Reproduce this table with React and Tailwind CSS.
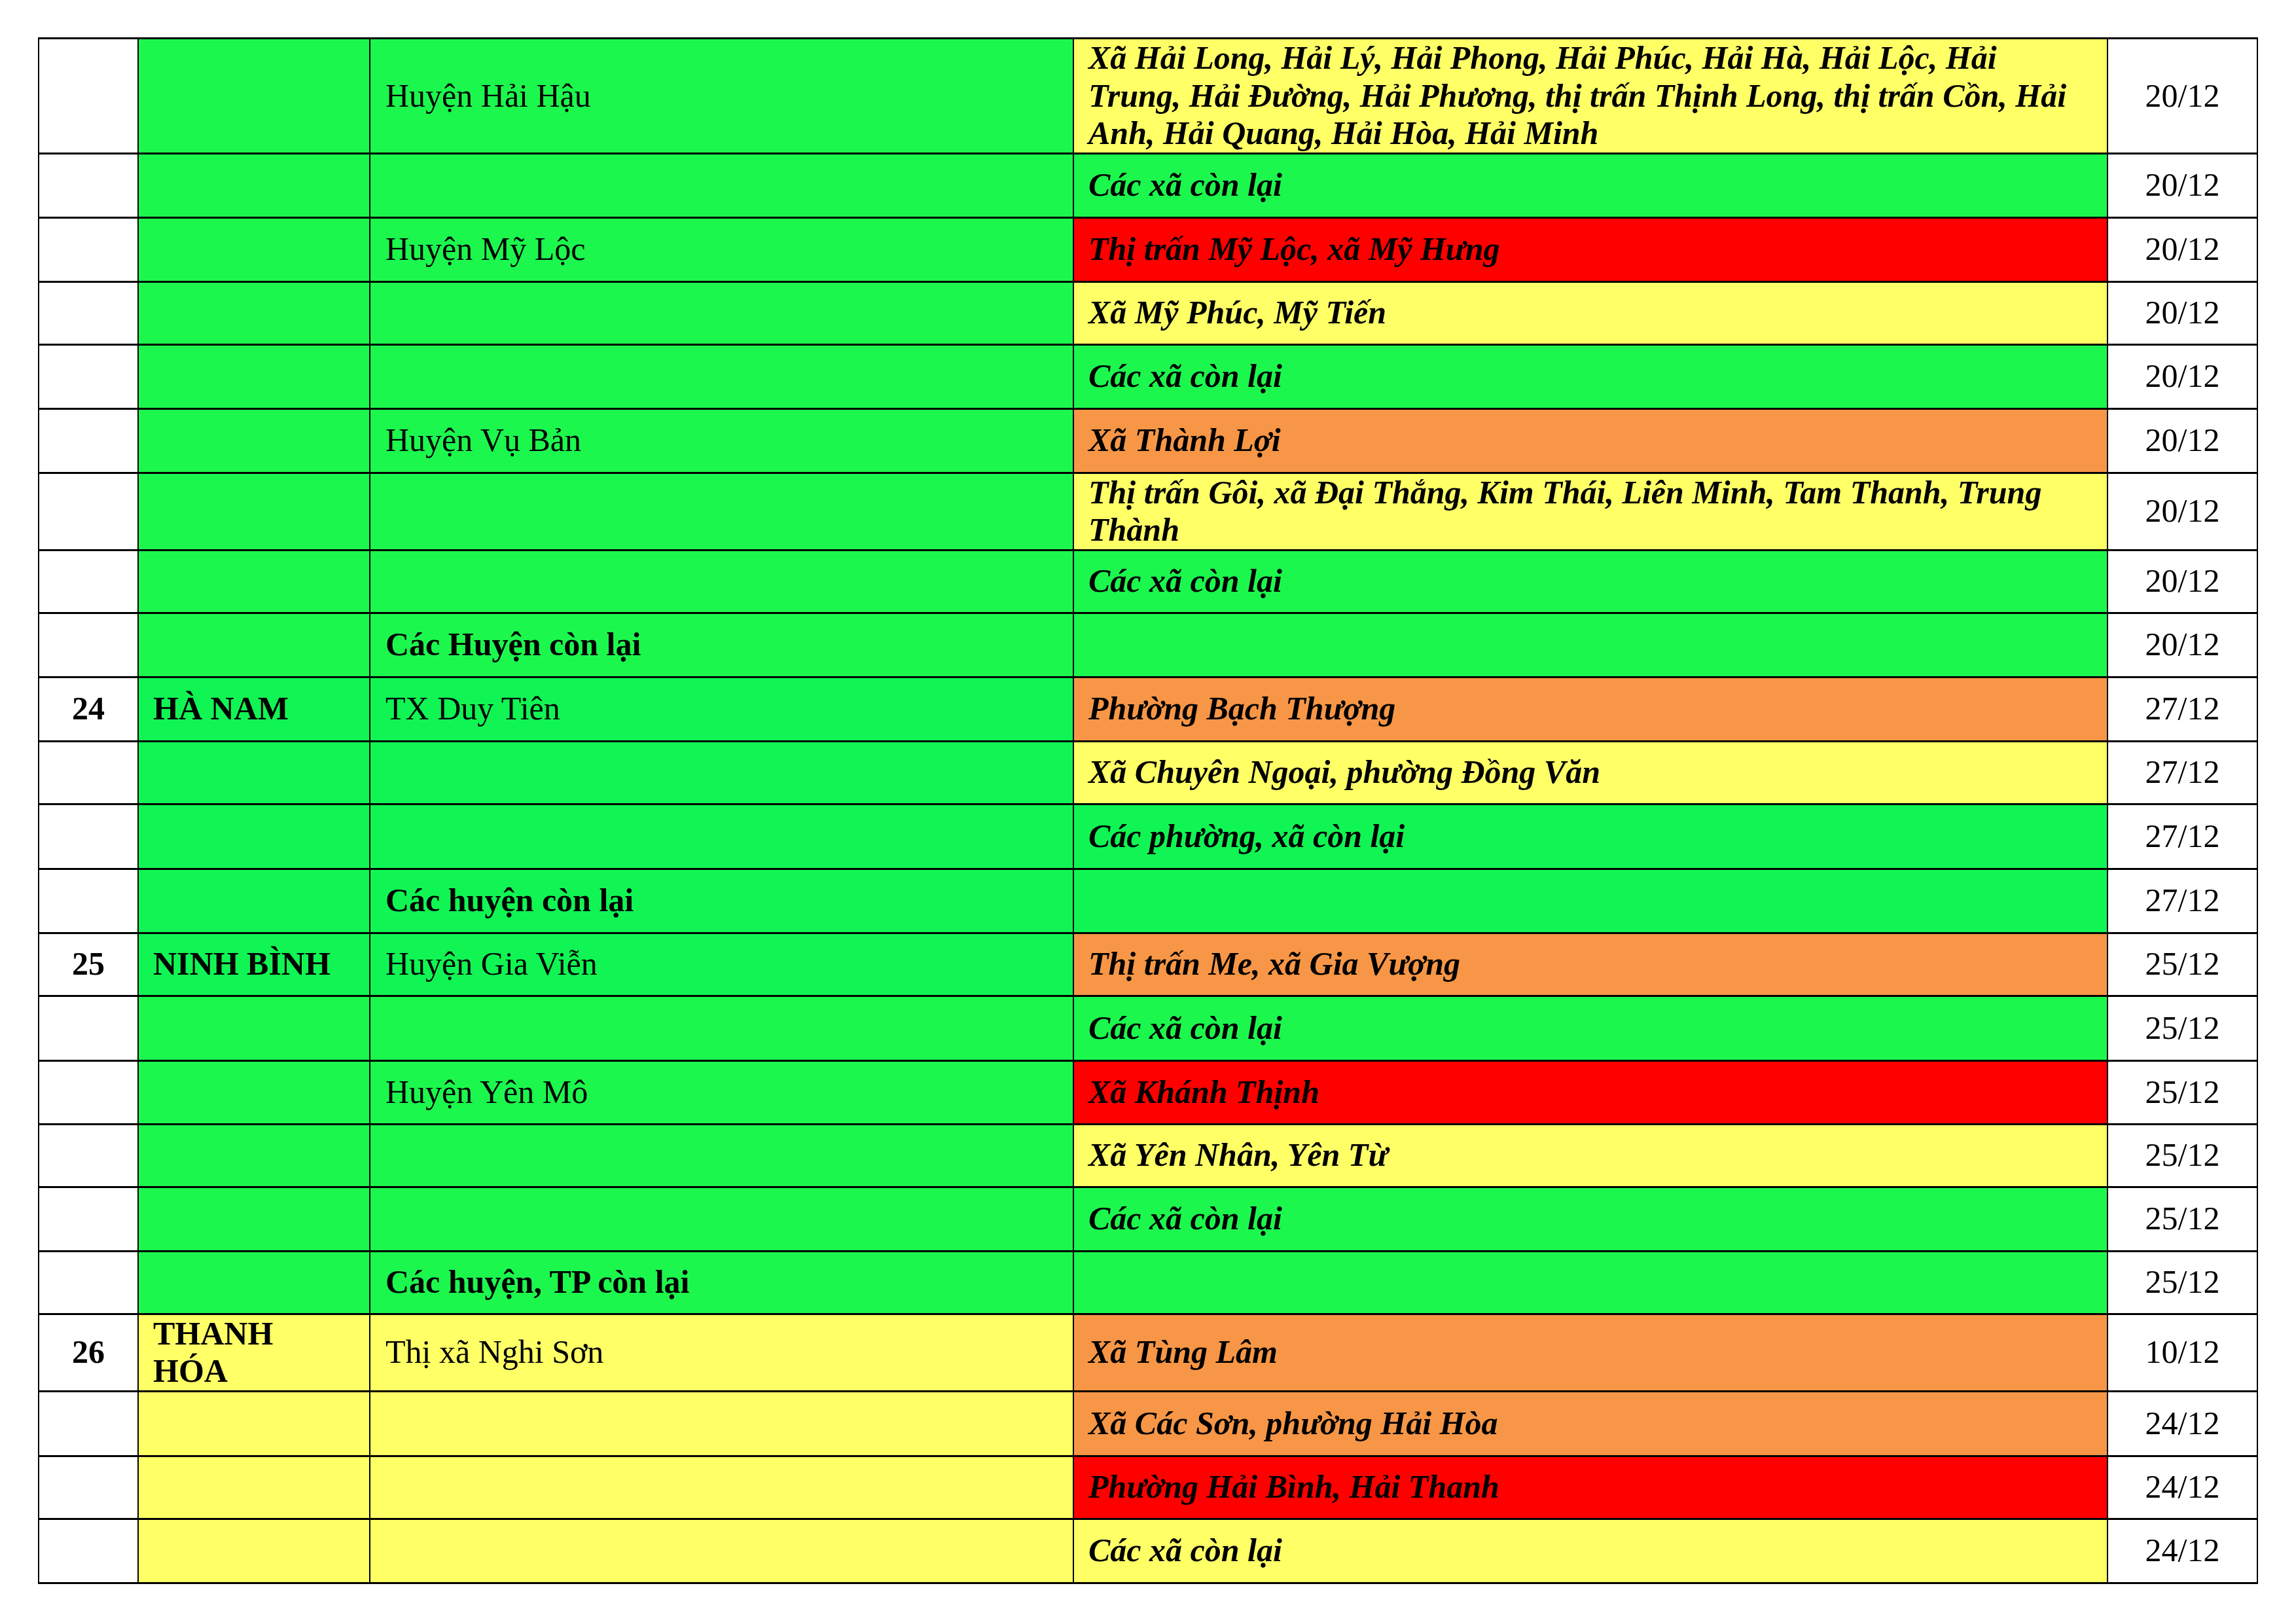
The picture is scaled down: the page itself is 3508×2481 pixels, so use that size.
import React from "react";

const GREEN = "bg-[#1cf74e]";
const GREEN2 = "bg-[#10f553]";
const YELLOW = "bg-[#ffff66]";
const ORANGE = "bg-[#f79646]";
const RED = "bg-[#ff0000]";

// no, province, district, area, fill of area, date, fill of prov/district, row height
const rows = [
  ["", "", "Huyện Hải Hậu", "Xã Hải Long, Hải Lý, Hải Phong, Hải Phúc, Hải Hà, Hải Lộc, Hải Trung, Hải Đường, Hải Phương, thị trấn Thịnh Long, thị trấn Cồn, Hải Anh, Hải Quang, Hải Hòa, Hải Minh", YELLOW, "20/12", GREEN, "h-[175px]"],
  ["", "", "", "Các xã còn lại", GREEN, "20/12", GREEN, "h-[98px]"],
  ["", "", "Huyện Mỹ Lộc", "Thị trấn Mỹ Lộc, xã Mỹ Hưng", RED, "20/12", GREEN, "h-[98px]"],
  ["", "", "", "Xã Mỹ Phúc, Mỹ Tiến", YELLOW, "20/12", GREEN, "h-[96px]"],
  ["", "", "", "Các xã còn lại", GREEN, "20/12", GREEN, "h-[98px]"],
  ["", "", "Huyện Vụ Bản", "Xã Thành Lợi", ORANGE, "20/12", GREEN, "h-[98px]"],
  ["", "", "", "Thị trấn Gôi, xã Đại Thắng, Kim Thái, Liên Minh, Tam Thanh, Trung Thành", YELLOW, "20/12", GREEN, "h-[115px]"],
  ["", "", "", "Các xã còn lại", GREEN, "20/12", GREEN, "h-[96px]"],
  ["", "", "!Các Huyện còn lại", "", GREEN, "20/12", GREEN, "h-[98px]"],
  ["24", "HÀ NAM", "TX Duy Tiên", "Phường Bạch Thượng", ORANGE, "27/12", GREEN2, "h-[98px]"],
  ["", "", "", "Xã Chuyên Ngoại, phường Đồng Văn", YELLOW, "27/12", GREEN2, "h-[96px]"],
  ["", "", "", "Các phường, xã còn lại", GREEN2, "27/12", GREEN2, "h-[99px]"],
  ["", "", "!Các huyện còn lại", "", GREEN2, "27/12", GREEN2, "h-[98px]"],
  ["25", "NINH BÌNH", "Huyện Gia Viễn", "Thị trấn Me, xã Gia Vượng", ORANGE, "25/12", GREEN2, "h-[96px]"],
  ["", "", "", "Các xã còn lại", GREEN, "25/12", GREEN, "h-[99px]"],
  ["", "", "Huyện Yên Mô", "Xã Khánh Thịnh", RED, "25/12", GREEN, "h-[97px]"],
  ["", "", "", "Xã Yên Nhân, Yên Từ", YELLOW, "25/12", GREEN, "h-[96px]"],
  ["", "", "", "Các xã còn lại", GREEN, "25/12", GREEN, "h-[98px]"],
  ["", "", "!Các huyện, TP còn lại", "", GREEN, "25/12", GREEN, "h-[96px]"],
  ["26", "THANH\nHÓA", "Thị xã Nghi Sơn", "Xã Tùng Lâm", ORANGE, "10/12", YELLOW, "h-[115px]"],
  ["", "", "", "Xã Các Sơn, phường Hải Hòa", ORANGE, "24/12", YELLOW, "h-[99px]"],
  ["", "", "", "Phường Hải Bình, Hải Thanh", RED, "24/12", YELLOW, "h-[96px]"],
  ["", "", "", "Các xã còn lại", YELLOW, "24/12", YELLOW, "h-[98px]"],
];

const cell = "border-x-2 border-y-[3px] border-black align-middle p-0";

export default function App() {
  return (
    <div className="w-[3508px] h-[2481px] bg-white pt-[57px] pl-[58px] font-['Liberation_Serif','Times_New_Roman',serif] text-[50px] leading-[1.15] text-black">
      <table className="table-fixed border-collapse w-[3390px]">
        <colgroup>
          <col className="w-[152px]" />
          <col className="w-[354px]" />
          <col className="w-[1075px]" />
          <col className="w-[1580px]" />
          <col className="w-[229px]" />
        </colgroup>
        <tbody>
          {rows.map(([no, prov, dist, area, areaBg, date, bg, h], i) => {
            const bold = dist.startsWith("!");
            return (
              <tr key={i} className={h}>
                <td className={`${cell} bg-white text-center font-bold`}>{no}</td>
                <td className={`${cell} ${bg} pl-[22px] font-bold whitespace-pre-line`}>{prov}</td>
                <td className={`${cell} ${bg} pl-[23px] ${bold ? "font-bold" : ""}`}>
                  {bold ? dist.slice(1) : dist}
                </td>
                <td className={`${cell} ${areaBg} pl-[22px] pr-[30px] font-bold italic`}>{area}</td>
                <td className={`${cell} bg-white text-center`}>{date}</td>
              </tr>
            );
          })}
        </tbody>
      </table>
    </div>
  );
}
